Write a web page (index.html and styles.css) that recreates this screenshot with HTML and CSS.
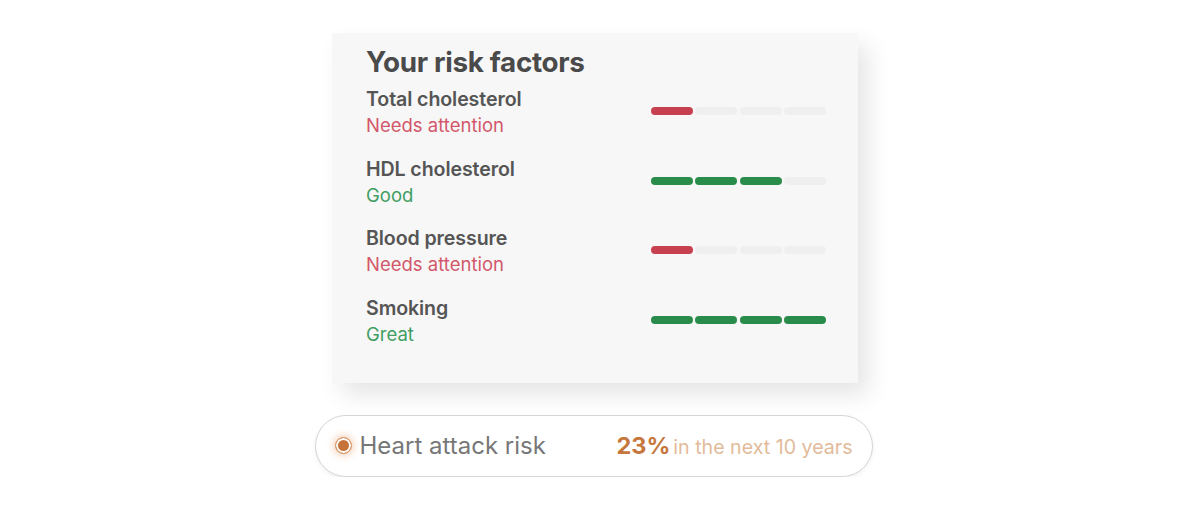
FILE: index.html
```html
<!DOCTYPE html>
<html lang="en">
<head>
<meta charset="utf-8">
<title>Risk factors</title>
<link rel="stylesheet" href="styles.css">
</head>
<body>
<main class="page">
  <section class="card">
    <h1 class="card-title">Your risk factors</h1>
    <ul class="factors">
      <li class="factor">
        <div class="factor-text">
          <span class="factor-name">Total cholesterol</span>
          <span class="factor-status status-bad">Needs attention</span>
        </div>
        <div class="meter">
          <span class="seg seg-bad"></span><span class="seg"></span><span class="seg"></span><span class="seg"></span>
        </div>
      </li>
      <li class="factor">
        <div class="factor-text">
          <span class="factor-name">HDL cholesterol</span>
          <span class="factor-status status-good">Good</span>
        </div>
        <div class="meter">
          <span class="seg seg-good"></span><span class="seg seg-good"></span><span class="seg seg-good"></span><span class="seg"></span>
        </div>
      </li>
      <li class="factor">
        <div class="factor-text">
          <span class="factor-name">Blood pressure</span>
          <span class="factor-status status-bad">Needs attention</span>
        </div>
        <div class="meter">
          <span class="seg seg-bad"></span><span class="seg"></span><span class="seg"></span><span class="seg"></span>
        </div>
      </li>
      <li class="factor">
        <div class="factor-text">
          <span class="factor-name">Smoking</span>
          <span class="factor-status status-good">Great</span>
        </div>
        <div class="meter">
          <span class="seg seg-good"></span><span class="seg seg-good"></span><span class="seg seg-good"></span><span class="seg seg-good"></span>
        </div>
      </li>
    </ul>
  </section>

  <div class="risk-pill">
    <span class="risk-dot"></span>
    <span class="risk-label">Heart attack risk</span>
    <span class="risk-value">
      <strong class="risk-pct">23%</strong>
      <span class="risk-period">in the next 10 years</span>
    </span>
  </div>
</main>
</body>
</html>
```

FILE: styles.css
```css
* {
  box-sizing: border-box;
}

html, body {
  margin: 0;
  padding: 0;
  background: #ffffff;
}

body {
  font-family: "Inter", "Noto Sans", "Liberation Sans", sans-serif;
  -webkit-font-smoothing: antialiased;
}

.page {
  display: flex;
  flex-direction: column;
  align-items: center;
  padding-top: 33px;
}

/* Risk factor card */
.card {
  width: 526px;
  margin-left: 3px;
  background: #f7f7f7;
  padding: 12px 32px 35px 34px;
  box-shadow: 10px 12px 22px rgba(0, 0, 0, 0.10);
}

.card-title {
  margin: 0;
  font-size: 27.8px;
  line-height: 34px;
  font-weight: 700;
  color: #4a4a4a;
  letter-spacing: -0.3px;
}

.factors {
  list-style: none;
  margin: 8px 0 0;
  padding: 0;
  display: flex;
  flex-direction: column;
  gap: 17.5px;
}

.factor {
  display: flex;
  justify-content: space-between;
  align-items: flex-start;
}

.factor-text {
  display: flex;
  flex-direction: column;
}

.factor-name {
  font-size: 19.6px;
  line-height: 24px;
  font-weight: 600;
  color: #555555;
  letter-spacing: -0.1px;
}

.factor-status {
  margin-top: 1px;
  font-size: 18.5px;
  line-height: 27px;
  font-weight: 400;
}

.status-bad {
  color: #d2576a;
}

.status-good {
  color: #3f9e62;
}

/* Four-step meter */
.meter {
  display: grid;
  grid-template-columns: repeat(4, 1fr);
  gap: 2.5px;
  width: 175px;
  margin-top: 20px;
}

.seg {
  display: block;
  height: 8px;
  border-radius: 4px;
  background: #efefef;
}

.seg-bad {
  background: #c7404f;
}

.seg-good {
  background: #2a8c4b;
}

/* Summary pill */
.risk-pill {
  margin-top: 32px;
  width: 558px;
  height: 62px;
  border: 1px solid #d6d6d6;
  border-radius: 31px;
  background: #ffffff;
  box-shadow: 0 2px 4px rgba(0, 0, 0, 0.06);
  display: flex;
  align-items: center;
  padding: 0 19px 0 19px;
}

.risk-dot {
  flex: none;
  width: 17px;
  height: 17px;
  border-radius: 50%;
  background: #c6733a;
  border: 1px solid #dc9a6c;
  box-shadow: inset 0 0 0 2px #ffffff, 0 0 7px 2px rgba(232, 160, 110, 0.45);
}

.risk-label {
  margin-left: 8px;
  font-size: 24px;
  line-height: 30px;
  color: #777777;
  font-weight: 400;
}

.risk-value {
  margin-left: auto;
  display: flex;
  align-items: baseline;
  gap: 3px;
}

.risk-pct {
  font-size: 23.5px;
  font-weight: 700;
  color: #c5773d;
}

.risk-period {
  font-size: 19.6px;
  color: #e2bb9b;
  font-weight: 400;
}
```
